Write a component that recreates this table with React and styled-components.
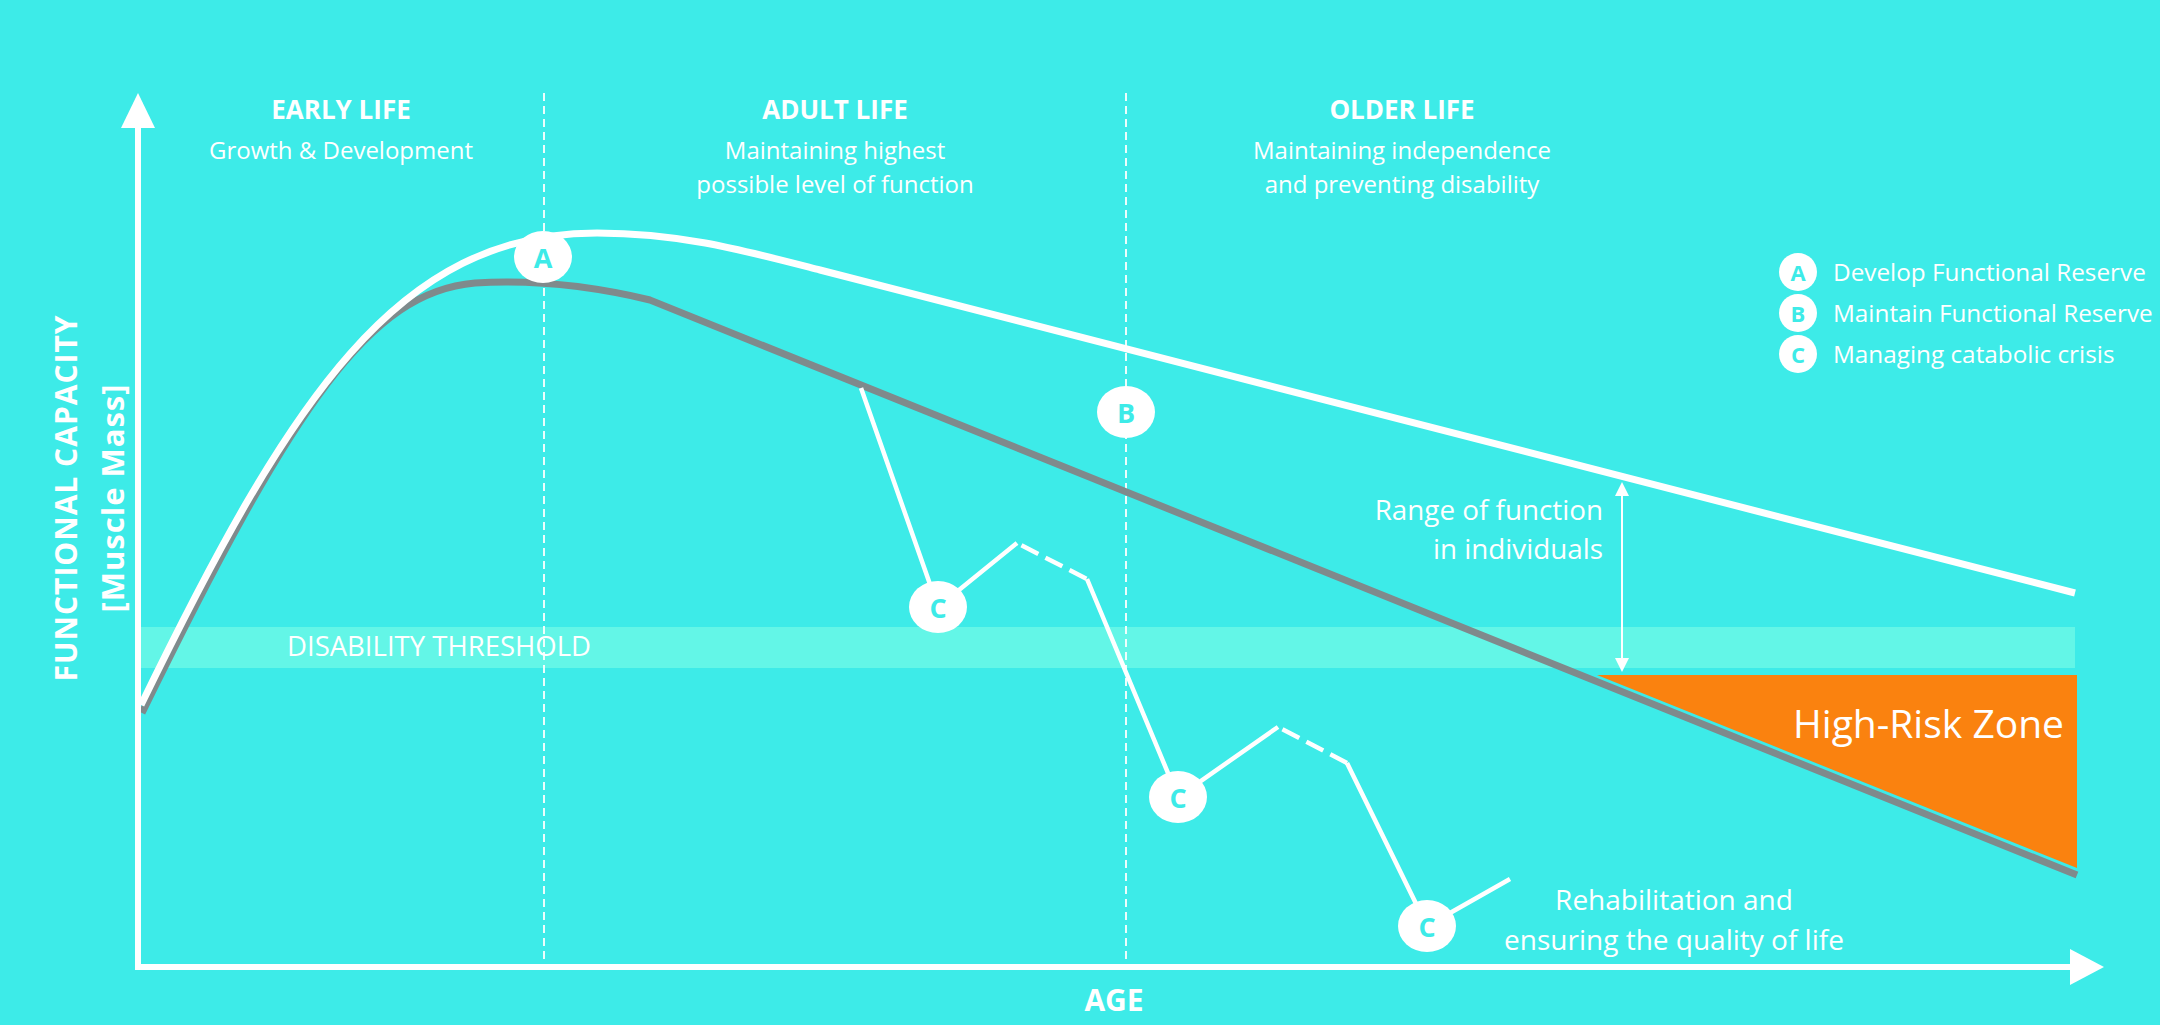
import styled, { createGlobalStyle } from "styled-components";

const CYAN = "#3debe8";
const BAND = "#63f6e7";
const GREY = "#7f8a8c";
const ORANGE = "#fa820f";

const GlobalStyle = createGlobalStyle`
  html, body {
    margin: 0;
    padding: 0;
    background: ${CYAN};
  }
  body {
    font-family: "Open Sans", "Liberation Sans", sans-serif;
    color: #fff;
  }
`;

// white = best case, grey = usual decline; both leave the axis together
const whitePath =
  "M141,705 C291,397 397,233 597,233 C680,233 742,250 820,270 L2075,593";
const greyPath =
  "M142,713 C294,403 370,292 475,283 C542,279 600,288 650,300 L2077,875";

const phases = [
  { title: "EARLY LIFE", lines: ["Growth & Development"] },
  { title: "ADULT LIFE", lines: ["Maintaining highest", "possible level of function"] },
  { title: "OLDER LIFE", lines: ["Maintaining independence", "and preventing disability"] },
];

const legend = [
  { key: "A", label: "Develop Functional Reserve" },
  { key: "B", label: "Maintain Functional Reserve" },
  { key: "C", label: "Managing catabolic crisis" },
];

const markers = [
  { key: "A", x: 543, y: 257 },
  { key: "B", x: 1126, y: 412 },
  { key: "C", x: 938, y: 607 },
  { key: "C", x: 1178, y: 797 },
  { key: "C", x: 1427, y: 926 },
];

const App = () => {
  return (
    <>
      <GlobalStyle />
      <Canvas>
        <ChartSvg width="2160" height="1025" viewBox="0 0 2160 1025">
          <rect x="141" y="627" width="1934" height="41" fill={BAND} />
          <polygon points="1597,675 2077,675 2077,868" fill={ORANGE} />
          <g stroke="#fff" strokeWidth="2" strokeDasharray="8 5" opacity="0.9">
            <line x1="544" y1="93" x2="544" y2="964" />
            <line x1="1126" y1="93" x2="1126" y2="964" />
          </g>
          <path d={greyPath} fill="none" stroke={GREY} strokeWidth="7" />
          <path d={whitePath} fill="none" stroke="#fff" strokeWidth="7" />
          <g stroke="#fff" strokeWidth="4.5" fill="none">
            <polyline points="861,388 938,607 1017,543" />
            <line x1="1017" y1="543" x2="1087" y2="579" strokeDasharray="19 8" strokeDashoffset="22" />
            <polyline points="1087,579 1178,797 1278,727" />
            <line x1="1278" y1="727" x2="1347" y2="763" strokeDasharray="19 8" strokeDashoffset="22" />
            <polyline points="1347,763 1427,926 1510,879" />
          </g>
          <g fill="#fff">
            <line x1="1622" y1="492" x2="1622" y2="662" stroke="#fff" strokeWidth="2" />
            <polygon points="1622,482 1615,496 1629,496" />
            <polygon points="1622,672 1615,658 1629,658" />
          </g>
          <g fill="#fff">
            <rect x="135" y="126" width="6" height="844" />
            <polygon points="138,93 121,128 155,128" />
            <rect x="135" y="964" width="1937" height="6" />
            <polygon points="2104,967 2070,949 2070,985" />
          </g>
        </ChartSvg>

        <PhaseRow>
          {phases.map((p) => (
            <Phase key={p.title}>
              <PhaseTitle>{p.title}</PhaseTitle>
              <PhaseText>
                {p.lines.map((l) => (
                  <div key={l}>{l}</div>
                ))}
              </PhaseText>
            </Phase>
          ))}
        </PhaseRow>

        {markers.map((m, i) => (
          <ChartBadge key={i} $x={m.x} $y={m.y}>
            {m.key}
          </ChartBadge>
        ))}

        <Legend>
          {legend.map((l) => (
            <LegendRow key={l.key}>
              <LegendBadge>{l.key}</LegendBadge>
              <LegendText>{l.label}</LegendText>
            </LegendRow>
          ))}
        </Legend>

        <YLabel>
          <YTitle>FUNCTIONAL CAPACITY</YTitle>
          <YSub>[Muscle Mass]</YSub>
        </YLabel>
        <AgeLabel>AGE</AgeLabel>

        <ThresholdLabel>DISABILITY THRESHOLD</ThresholdLabel>
        <RangeLabel>
          Range of function
          <br />
          in individuals
        </RangeLabel>
        <RiskLabel>High-Risk Zone</RiskLabel>
        <RehabLabel>
          Rehabilitation and
          <br />
          ensuring the quality of life
        </RehabLabel>
      </Canvas>
    </>
  );
};

const Canvas = styled.div`
  position: relative;
  width: 2160px;
  height: 1025px;
  overflow: hidden;
  background: ${CYAN};
`;

const ChartSvg = styled.svg`
  position: absolute;
  inset: 0;
  display: block;
`;

const PhaseRow = styled.div`
  position: relative;
  display: grid;
  grid-template-columns: 406px 582px 552px;
  padding: 93px 0 0 138px;
`;

const Phase = styled.div`
  text-align: center;
`;

const PhaseTitle = styled.div`
  font-size: 26px;
  font-weight: 700;
  line-height: 32px;
`;

const PhaseText = styled.div`
  margin-top: 8px;
  font-size: 24px;
  line-height: 34px;
`;

const Badge = styled.div`
  display: flex;
  align-items: center;
  justify-content: center;
  flex-shrink: 0;
  border-radius: 50%;
  background: #fff;
  color: ${CYAN};
  font-weight: 700;
`;

const ChartBadge = styled(Badge)`
  position: absolute;
  left: ${(p) => p.$x}px;
  top: ${(p) => p.$y}px;
  width: 58px;
  height: 52px;
  transform: translate(-50%, -50%);
  font-size: 27px;
`;

const LegendBadge = styled(Badge)`
  width: 38px;
  height: 38px;
  font-size: 22px;
`;

const Legend = styled.div`
  position: absolute;
  left: 1779px;
  top: 253px;
  display: flex;
  flex-direction: column;
  gap: 3px;
`;

const LegendRow = styled.div`
  display: flex;
  align-items: center;
  gap: 16px;
`;

const LegendText = styled.span`
  font-size: 24.3px;
  line-height: 38px;
  white-space: nowrap;
`;

const YLabel = styled.div`
  position: absolute;
  left: -161px;
  top: 451px;
  width: 500px;
  text-align: center;
  font-weight: 700;
  line-height: 47px;
  transform: rotate(-90deg);
`;

const YTitle = styled.div`
  font-size: 30px;
  letter-spacing: 1px;
`;

const YSub = styled.div`
  font-size: 31px;
  letter-spacing: 1px;
`;

const AgeLabel = styled.div`
  position: absolute;
  left: 1064px;
  top: 982px;
  width: 100px;
  text-align: center;
  font-size: 30px;
  font-weight: 700;
  line-height: 36px;
`;

const ThresholdLabel = styled.div`
  position: absolute;
  left: 287px;
  top: 626px;
  font-size: 27.5px;
  line-height: 40px;
  white-space: nowrap;
`;

const RangeLabel = styled.div`
  position: absolute;
  right: 557px;
  top: 490px;
  text-align: right;
  font-size: 27.8px;
  line-height: 39px;
  white-space: nowrap;
`;

const RiskLabel = styled.div`
  position: absolute;
  right: 96px;
  top: 700px;
  font-size: 39px;
  line-height: 46px;
  white-space: nowrap;
`;

const RehabLabel = styled.div`
  position: absolute;
  left: 1474px;
  top: 879px;
  width: 400px;
  text-align: center;
  font-size: 28px;
  line-height: 40px;
`;

export default App;
